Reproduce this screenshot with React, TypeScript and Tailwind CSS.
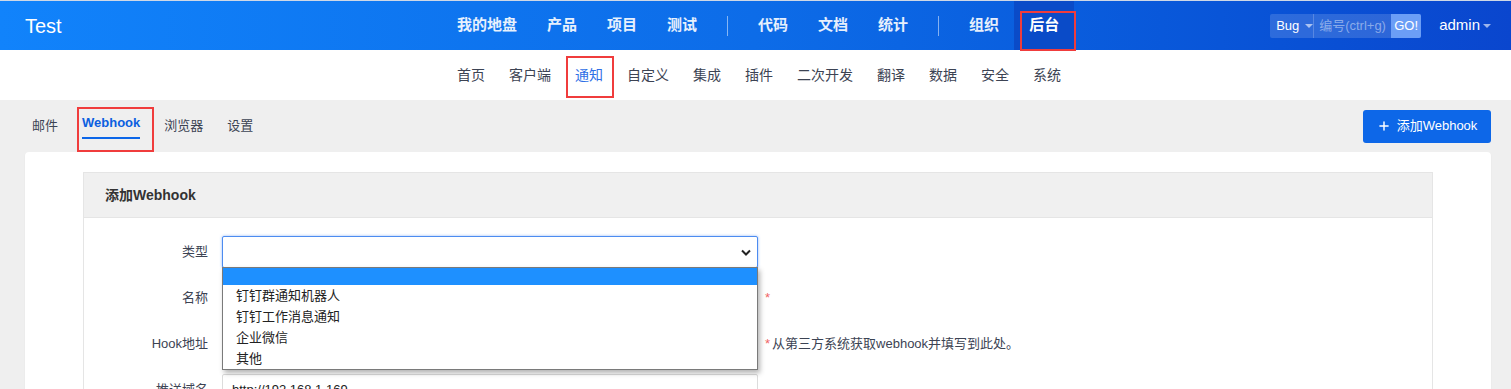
import { Plus } from "lucide-react";

const mainNav = [
  ["我的地盘", "产品", "项目", "测试"],
  ["代码", "文档", "统计"],
  ["组织", "后台"],
];

const subNav = ["首页", "客户端", "通知", "自定义", "集成", "插件", "二次开发", "翻译", "数据", "安全", "系统"];

const tabs = ["邮件", "Webhook", "浏览器", "设置"];

const typeOptions = ["钉钉群通知机器人", "钉钉工作消息通知", "企业微信", "其他"];

function Caret({ className = "" }: { className?: string }) {
  return <span className={`inline-block border-x-[4px] border-t-[4px] border-x-transparent ${className}`} />;
}

function Header() {
  return (
    <header className="flex h-[50px] items-center border-t border-[#cfd8e6] bg-gradient-to-r from-[#1183fb] via-[#0d6ce8] to-[#0a46ce] text-white">
      <div className="w-[442px] shrink-0 pl-[25px] text-[20px] leading-none">Test</div>
      <nav className="flex h-full items-center text-[15px] font-bold">
        {mainNav.map((group, gi) => (
          <div key={gi} className="flex h-full items-center">
            {gi > 0 && <span className="mx-[15px] h-[20px] w-px bg-white/50" />}
            {group.map((item) =>
              item === "后台" ? (
                <div key={item} className="relative flex h-full items-center bg-[#0a4bc8] px-[15px]">
                  <span className="text-white">{item}</span>
                  <span className="absolute top-[10px] bottom-[-1px] left-[6px] right-[-2px] border-2 border-[#f03c3c]" />
                </div>
              ) : (
                <span key={item} className="px-[15px] text-white/90">
                  {item}
                </span>
              )
            )}
          </div>
        ))}
      </nav>
      <div className="flex flex-1 items-center justify-end pr-[20px]">
        <div className="flex h-[24px] items-stretch overflow-hidden rounded-[2px] bg-white/15 text-[13px]">
          <span className="flex w-[44px] items-center gap-[6px] border-r border-white/20 pl-[6px]">
            Bug <Caret className="border-t-white/60" />
          </span>
          <span className="flex w-[77px] items-center pl-[5px] text-white/45">编号(ctrl+g)</span>
          <span className="flex w-[30px] items-center justify-center bg-[#6b9ef6] text-white">GO!</span>
        </div>
        <span className="ml-[18px] flex items-center gap-[3px] text-[15px]">
          admin <Caret className="border-t-white/60" />
        </span>
      </div>
    </header>
  );
}

function SubNav() {
  return (
    <div className="flex h-[50px] items-center justify-center bg-white pl-[7px] text-[14px] text-[#3c4353]">
      {subNav.map((item) =>
        item === "通知" ? (
          <span key={item} className="relative px-3 text-[#2f6fe6]">
            {item}
            <span className="absolute -top-[9px] -bottom-[12px] left-[3px] right-[1px] border-2 border-[#f03c3c]" />
          </span>
        ) : (
          <span key={item} className="px-3">
            {item}
          </span>
        )
      )}
    </div>
  );
}

function Tabs() {
  return (
    <div className="flex h-[52px] items-center justify-between">
      <div className="ml-[-5px] flex h-full items-center text-[13px] text-[#3c4353]">
        {tabs.map((t) =>
          t === "Webhook" ? (
            <div key={t} className="relative flex h-full flex-col items-center justify-center px-3">
              <span className="font-bold text-[#0c5fe0]">{t}</span>
              <span className="mt-[4px] h-[2px] w-full bg-[#0c66e8]" />
              <span className="absolute top-[7px] bottom-0 left-[7px] right-[-2px] border-2 border-[#f03c3c]" />
            </div>
          ) : (
            <span key={t} className="px-3">
              {t}
            </span>
          )
        )}
      </div>
      <button className="flex h-[33px] w-[128px] items-center justify-center gap-[6px] rounded-[3px] bg-[#0d67e8] text-[13px] text-white">
        <Plus size={14} strokeWidth={2.5} />
        添加Webhook
      </button>
    </div>
  );
}

function Row({ label, children, hint }: { label: string; children: React.ReactNode; hint?: React.ReactNode }) {
  return (
    <div className="flex h-[32px] items-center">
      <label className="w-[124px] shrink-0 text-right text-[13px] text-[#3c4353]">{label}</label>
      <div className="relative ml-[14px] h-full w-[536px]">{children}</div>
      {hint}
    </div>
  );
}

function Star({ text }: { text?: string }) {
  return (
    <span className="ml-[7px] flex items-center text-[13px] text-[#3c4353]">
      <span className="mr-[2px] text-[#ef6565]">*</span>
      {text}
    </span>
  );
}

function Form() {
  return (
    <div className="flex flex-col gap-[14px] pt-[18px]">
      <Row label="类型">
        <div className="flex h-full items-center justify-end rounded-[2px] border border-[#4d8cf0] bg-white pr-[6px] shadow-[0_0_3px_rgba(77,140,240,0.6)]">
          <svg width="10" height="7" viewBox="0 0 10 7" className="text-[#222]">
            <path d="M1 1.5 5 5.5 9 1.5" fill="none" stroke="currentColor" strokeWidth="2" />
          </svg>
        </div>
        <div className="absolute top-[31px] left-0 z-10 w-full border border-[#7a7a7a] bg-white text-[13px] text-[#222] shadow-[2px_3px_5px_rgba(0,0,0,0.3)]">
          <div className="h-[17px] bg-[#1e90ff]" />
          {typeOptions.map((o) => (
            <div key={o} className="flex h-[21px] items-center pl-[13px]">
              {o}
            </div>
          ))}
        </div>
      </Row>
      <Row label="名称" hint={<Star />}>
        <div className="h-full rounded-[2px] border border-[#dcdcdc] bg-white" />
      </Row>
      <Row label="Hook地址" hint={<Star text="从第三方系统获取webhook并填写到此处。" />}>
        <div className="h-full rounded-[2px] border border-[#dcdcdc] bg-white" />
      </Row>
      <Row label="推送域名">
        <div className="flex h-full items-center rounded-[2px] border border-[#dcdcdc] bg-white pl-[9px] text-[13px] text-[#222]">
          http://192.168.1.169
        </div>
      </Row>
    </div>
  );
}

export default function App() {
  return (
    <div className="h-[389px] w-[1511px] overflow-hidden bg-[#efefef] font-['Liberation_Sans','Noto_Sans_CJK_SC',sans-serif]">
      <Header />
      <SubNav />
      <main className="pl-[25px] pr-[20px]">
        <Tabs />
        <section className="rounded-t-[4px] bg-white px-[58px] pt-[20px] shadow-[0_1px_2px_rgba(0,0,0,0.05)]">
          <div className="border border-[#e5e5e5]">
            <div className="flex h-[45px] items-center border-b border-[#e5e5e5] bg-[#f0f0f0] pl-[21px] text-[14px] font-bold text-[#333]">
              添加Webhook
            </div>
            <Form />
          </div>
        </section>
      </main>
    </div>
  );
}
